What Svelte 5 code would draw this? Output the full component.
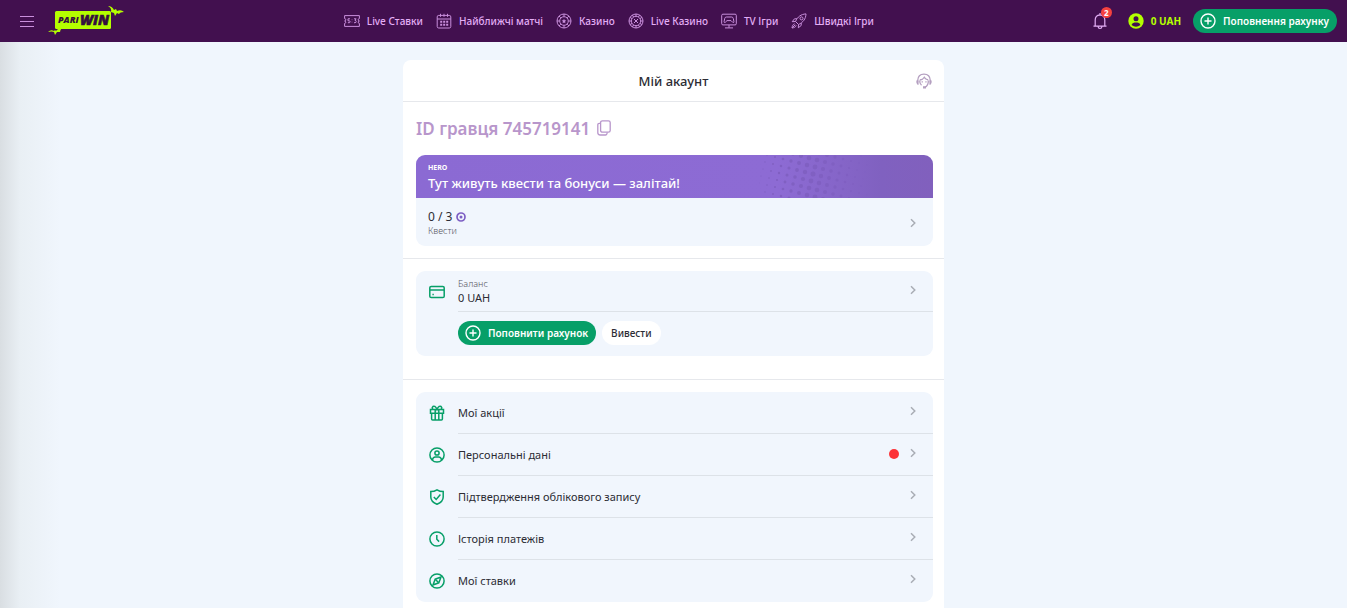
<script lang="ts">
    interface NavItem {
        icon: string;
        label: string;
    }

    interface MenuItem {
        icon: string;
        label: string;
        alert?: boolean;
    }

    const navItems: NavItem[] = [
        { icon: "score", label: "Live Ставки" },
        { icon: "calendar", label: "Найближчі матчі" },
        { icon: "chip", label: "Казино" },
        { icon: "roulette", label: "Live Казино" },
        { icon: "tv", label: "TV Ігри" },
        { icon: "rocket", label: "Швидкі Ігри" },
    ];

    const menuItems: MenuItem[] = [
        { icon: "gift", label: "Мої акції" },
        { icon: "user", label: "Персональні дані", alert: true },
        { icon: "shield", label: "Підтвердження облікового запису" },
        { icon: "clock", label: "Історія платежів" },
        { icon: "compass", label: "Мої ставки" },
    ];

    // halftone pattern on the banner: a slanted grid, biggest dots in the middle
    const dots: { x: number; y: number; r: number }[] = [];
    for (let row = -3; row < 8; row++) {
        for (let col = 0; col < 14; col++) {
            const x = 8 + col * 8 - row * 2;
            const y = row * 7 + col * 2;
            const r = 2.5 - Math.abs(x - 54) / 26;
            if (r > 0.4 && y > -3 && y < 46) dots.push({ x, y, r });
        }
    }

    let playerId = $state("745719141");
    let notifications = $state(2);

    function copyId() {
        navigator.clipboard?.writeText(playerId);
    }
</script>

{#snippet chevron()}
    <svg class="chevron" viewBox="0 0 8 10" aria-hidden="true">
        <path d="M2 1.2 5.8 5 2 8.8" />
    </svg>
{/snippet}

{#snippet plusIcon()}
    <svg class="plus" viewBox="0 0 16 16" aria-hidden="true">
        <circle cx="8" cy="8" r="7" />
        <path d="M8 4.5v7M4.5 8h7" />
    </svg>
{/snippet}

{#snippet icon(name: string)}
    <svg class="icon" viewBox="0 0 16 16" aria-hidden="true">
        {#if name === "score"}
            <path d="M.6 2.6h14.8v3a1.2 1.2 0 0 0 0 2.4 1.2 1.2 0 0 0 0 2.4v3H.6v-3A1.2 1.2 0 0 0 .6 8a1.2 1.2 0 0 0 0-2.4z" />
            <path d="M6 5.8H4v2h1.2q.9 0 .9.9 0 1-.9 1H3.9M10 5.8h2.1L11 7.4q1.2 0 1.2 1.1 0 1.2-1.2 1.2h-1M8 6.6v.5M8 8.8v.5" />
        {:else if name === "calendar"}
            <rect x="1.2" y="2.4" width="13.6" height="12.6" rx="1.5" />
            <path d="M1.2 6h13.6M4.5.8v3M8 .8v3M11.5.8v3" />
            <path class="dotted" d="M4.2 8.8h8.5M4.2 11.8h8.5" />
        {:else if name === "chip"}
            <circle cx="8" cy="8" r="7" />
            <circle cx="8" cy="8" r="4.3" />
            <path d="M8 1v2.5M8 12.5V15M1 8h2.5M12.5 8H15M3 3l1.8 1.8M11.2 11.2 13 13M13 3l-1.8 1.8M4.8 11.2 3 13" />
            <path class="filled" d="m8 5.7.7 1.5 1.6.2-1.2 1.2.3 1.6L8 9.4l-1.4.8.3-1.6-1.2-1.2 1.6-.2z" />
        {:else if name === "roulette"}
            <circle cx="8" cy="8" r="7" />
            <circle cx="8" cy="8" r="4.7" />
            <path d="m6 6 4 4M10 6l-4 4M8 1v2.3M8 12.7V15M1 8h2.3M12.7 8H15M4.5 2l1 2M10.5 12l1 2M14 4.5l-2 1M4 10.5l-2 1M2 4.5l2 1M12 10.5l2 1M11.5 2l-1 2M5.5 12l-1 2" />
        {:else if name === "tv"}
            <rect x=".7" y="1.2" width="14.6" height="10.7" rx="1.2" />
            <path d="M8 12v2.7M4 14.9h8M5.4 4h5.2q1.3 0 1.7 1.5l.6 3q.1 1.4-1.1.9L10 7.6H6L4.2 9.4q-1.2.5-1.1-.9l.6-3Q4.1 4 5.4 4z" />
        {:else if name === "rocket"}
            <path d="M4.5 8.5C6.5 3.8 10 1.2 15 .9c-.2 5-2.9 8.5-7.5 10.6zM6 5.8H3.5L1.2 8.7l3.3-.2M10.2 10v2.5l-2.9 2.3.2-3.3M3.6 10.8C1.8 11.4 1.3 12.8 1 15c2.2-.3 3.6-.8 4.2-2.6M1.2 14.8l3-3" />
            <circle cx="10.5" cy="5.4" r="1.5" />
        {:else if name === "card"}
            <rect x=".8" y="2.4" width="14.4" height="11.2" rx="1.4" />
            <path d="M1 6h14M3.4 10.4h1.4" />
        {:else if name === "gift"}
            <path d="M1.5 4.6h13v3.6h-13zM2.6 8.2v5.9q0 1 1 1h8.8q1 0 1-1V8.2M6.2 4.6v10.5M9.8 4.6v10.5M6.2 4.5H4.5Q2.8 3.8 3.4 2.2q.7-1.5 2.4-.8Q7.3 2.4 8 4.5 8.7 2.4 10.2 1.4q1.7-.7 2.4.8.6 1.6-1.1 2.3" />
        {:else if name === "user"}
            <circle cx="8" cy="8" r="7.1" />
            <circle cx="8" cy="6" r="2.1" />
            <path d="M3.4 13Q4 9.9 6.3 9.9h3.4q2.3 0 2.9 3.1" />
        {:else if name === "shield"}
            <path d="M8 .8q2.8 1.8 6.2 1.8V8q0 4.8-6.2 7.3Q1.8 12.8 1.8 8V2.6Q5.2 2.6 8 .8z" />
            <path d="m4.8 8 2.4 2.5 4.2-5" />
        {:else if name === "clock"}
            <circle cx="8" cy="8" r="7.1" />
            <path d="M7.8 4v4.3l2.3 2.3" />
        {:else if name === "compass"}
            <circle cx="8" cy="8" r="7.1" />
            <path d="m12 4-2.2 5.8L4 12l2.2-5.8z" />
            <path d="m6.5 6.5 3 3" />
        {/if}
    </svg>
{/snippet}

<div class="page">
    <header class="topbar">
        <div class="brand">
            <button class="burger" aria-label="Меню">
                <span></span>
                <span></span>
                <span></span>
            </button>
            <a class="logo" href="#home" aria-label="PariWin">
                <svg viewBox="0 0 78 30">
                    <rect x="7" y="5" width="56" height="18" rx="1.5" />
                    <path d="M60 0q4 0 6 4l2-1 1 2q4-2 7 1-4 0-5 2l-2-1-2 3-1-3-3-1q1-4-3-6z" />
                    <path d="M0 26q3-3 6-1l1-1 1 1q2-3 6-3-2 2-2 4l-3 0-2 3-1-3q-2-1-6 0z" />
                    <text class="pari" x="10" y="17">PARI</text>
                    <text class="win" x="32" y="19">WIN</text>
                </svg>
            </a>
        </div>

        <nav class="nav">
            {#each navItems as item}
                <a href="#{item.icon}">
                    {@render icon(item.icon)}
                    {item.label}
                </a>
            {/each}
        </nav>

        <div class="account">
            <button class="bell" aria-label="Сповіщення">
                <svg viewBox="0 0 16 18">
                    <path d="M1.5 14.2h13M3.2 14V8q0-4.8 4.8-5.2Q12.8 3.2 12.8 8v6M8 1v1.6M6 14.5q.3 2 2 2t2-2" />
                </svg>
                <span class="badge">{notifications}</span>
            </button>
            <a class="balance" href="#account">
                <svg viewBox="0 0 16 16" aria-hidden="true">
                    <circle cx="8" cy="8" r="7.7" />
                    <path d="M8 3.2a2.5 2.5 0 1 1 0 5 2.5 2.5 0 0 1 0-5zM3.5 12q.8-2.6 3-2.6h3q2.2 0 3 2.6-4.5 3.6-9 0z" />
                </svg>
                0 UAH
            </a>
            <button class="deposit">
                {@render plusIcon()}
                Поповнення рахунку
            </button>
        </div>
    </header>

    <main class="card">
        <div class="card-header">
            <h1>Мій акаунт</h1>
            <button class="support" aria-label="Підтримка">
                <svg viewBox="0 0 16 16">
                    <path d="M1.7 8.5v-1Q2 1.2 8 1.2t6.3 6.3v1M3.8 7Q7 6.5 8.3 4.2 9.5 6.3 12.2 6.8M3.7 7.5q-.2 3 1.8 4.7M12.3 7.5q.2 5-3.3 6.8" />
                    <path class="filled" d="M.3 7.5h2.3v4.3H1.5Q0 10 .3 7.5zM13.4 7.5h2.3q.3 2.5-1.2 4.3h-1.1zM7 13.2h3v2.2H7zM5.6 8.3h1.3v1.3H5.6zM9.3 8.3h1.3v1.3H9.3z" />
                </svg>
            </button>
        </div>

        <section>
            <div class="player">
                <h2>ID гравця {playerId}</h2>
                <button aria-label="Копіювати" onclick={copyId}>
                    <svg viewBox="0 0 14 16">
                        <rect x="3.6" y=".8" width="9.6" height="11.4" rx="1.8" />
                        <path d="M3.5 3.4H2.3Q.8 3.4.8 5v7.5q0 2.5 2.5 2.5h5.2q1.5 0 1.7-2.5" />
                    </svg>
                </button>
            </div>
            <a class="hero" href="#hero">
                <div class="banner">
                    <svg class="halftone" viewBox="0 0 112 43" aria-hidden="true">
                        {#each dots as dot}
                            <circle cx={dot.x} cy={dot.y} r={dot.r} />
                        {/each}
                    </svg>
                    <span class="tag">HERO</span>
                    <strong>Тут живуть квести та бонуси — залітай!</strong>
                </div>
                <div class="quests">
                    <div>
                        <div class="count">
                            0 / 3
                            <svg viewBox="0 0 10 10" aria-hidden="true">
                                <circle class="ring" cx="5" cy="5" r="4" />
                                <circle class="core" cx="5" cy="5" r="1.5" />
                            </svg>
                        </div>
                        <div class="caption">Квести</div>
                    </div>
                    {@render chevron()}
                </div>
            </a>
        </section>

        <section class="wallet">
            <div class="panel">
                <a class="row wallet-row" href="#balance">
                    {@render icon("card")}
                    <span class="row-body">
                        <span class="amount">
                            <small>Баланс</small>
                            <span>0 UAH</span>
                        </span>
                        {@render chevron()}
                    </span>
                </a>
                <div class="actions">
                    <button class="deposit">
                        {@render plusIcon()}
                        Поповнити рахунок
                    </button>
                    <button class="withdraw">Вивести</button>
                </div>
            </div>
        </section>

        <section class="menu">
            <div class="panel">
                {#each menuItems as item}
                    <a class="row" href="#{item.icon}">
                        {@render icon(item.icon)}
                        <span class="row-body">
                            <span>{item.label}</span>
                            {#if item.alert}
                                <span class="alert"></span>
                            {/if}
                            {@render chevron()}
                        </span>
                    </a>
                {/each}
            </div>
        </section>
    </main>
</div>

<style>
    :global(body) {
        margin: 0;
        background: #f0f6fd;
    }

    .page {
        display: flex;
        flex-direction: column;
        min-height: 100vh;
        font-family: "Noto Sans", "Open Sans", sans-serif;
        font-size: 12px;
        color: #2c2c34;
        background: linear-gradient(90deg, #d9dee2 0, #e9eff4 20px, #f0f6fd 60px);
    }

    * {
        box-sizing: border-box;
    }

    a {
        color: inherit;
        text-decoration: none;
    }

    button {
        border: 0;
        padding: 0;
        background: none;
        font: inherit;
        color: inherit;
        cursor: pointer;
    }

    svg {
        display: block;
        flex: none;
        fill: none;
        stroke: currentColor;
    }

    .topbar {
        display: flex;
        align-items: center;
        justify-content: space-between;
        height: 42px;
        padding: 0 10px 0 20px;
        background: #42104f;
        color: #e3aef5;
    }

    .brand,
    .nav,
    .nav a,
    .account,
    .balance {
        display: flex;
        align-items: center;
    }

    .brand {
        gap: 14px;
    }

    .burger {
        display: flex;
        flex-direction: column;
        gap: 4px;
        width: 14px;
    }

    .burger span {
        height: 1px;
        background: #c98fdc;
    }

    .logo svg {
        width: 78px;
        height: 30px;
        fill: #b4ff00;
        stroke: none;
    }

    .logo text {
        fill: #35103f;
        font-family: "Open Sans", sans-serif;
        font-style: italic;
        font-weight: 800;
    }

    .logo .pari {
        font-size: 9px;
    }

    .logo .win {
        font-size: 14px;
        stroke: #35103f;
        stroke-width: 0.6;
    }

    .nav {
        gap: 13px;
        padding-bottom: 1px;
        font-size: 10px;
        font-weight: 500;
        white-space: nowrap;
    }

    .nav a {
        gap: 7px;
    }

    .icon {
        width: 16px;
        height: 16px;
    }

    .nav .icon {
        color: #c98fdc;
    }

    .dotted {
        stroke-width: 2;
        stroke-dasharray: 2 1;
    }

    .filled {
        fill: currentColor;
        stroke: none;
    }

    .account {
        font-size: 10px;
        font-weight: 700;
        white-space: nowrap;
    }

    .bell {
        position: relative;
        margin-right: 20px;
    }

    .bell svg {
        width: 16px;
        height: 18px;
        stroke-width: 1.2;
    }

    .badge {
        position: absolute;
        top: -5px;
        right: -4px;
        width: 11px;
        height: 11px;
        border-radius: 50%;
        background: #f5413f;
        color: #fff;
        font-size: 8px;
        line-height: 11px;
    }

    .balance {
        gap: 7px;
        margin-right: 12px;
        color: #b4ff00;
    }

    .balance svg {
        width: 16px;
        height: 16px;
        fill: #b4ff00;
        stroke: none;
    }

    .balance path {
        fill: #42104f;
    }

    .deposit {
        display: flex;
        align-items: center;
        gap: 7px;
        height: 24px;
        padding: 0 8px 0 7px;
        border-radius: 12px;
        background: #079f68;
        color: #fff;
        font-size: 10px;
        font-weight: 600;
        white-space: nowrap;
    }

    .plus {
        width: 16px;
        height: 16px;
        stroke-width: 1.4;
    }

    .card {
        flex: 1;
        width: 100%;
        max-width: 541px;
        margin: 18px auto 0;
        border-radius: 8px 8px 0 0;
        background: #fff;
    }

    .card-header {
        display: grid;
        grid-template-columns: 1fr auto 1fr;
        align-items: center;
        height: 42px;
        padding: 0 12px;
        border-bottom: 1px solid #e6e8ec;
    }

    h1 {
        grid-column: 2;
        margin: 0;
        font-size: 13px;
        font-weight: 500;
    }

    .support {
        justify-self: end;
        color: #b49fc0;
    }

    .support svg {
        width: 16px;
        height: 16px;
        stroke-width: 1.3;
    }

    section {
        padding: 12px 11px 12px 13px;
        border-bottom: 1px solid #e6e8ec;
    }

    .player {
        display: flex;
        align-items: center;
        gap: 7px;
        height: 28px;
        margin-bottom: 13px;
        color: #b896cb;
    }

    h2 {
        margin: 0;
        font-size: 17px;
        font-weight: 600;
    }

    .player svg {
        width: 14px;
        height: 16px;
        stroke-width: 1.3;
    }

    .hero {
        display: block;
        overflow: hidden;
        border-radius: 9px;
        background: #f1f6fd;
    }

    .banner {
        position: relative;
        display: flex;
        flex-direction: column;
        height: 43px;
        padding: 7px 12px 0;
        background: linear-gradient(90deg, #8b6ad3 0%, #8d6bd4 70%, #8061c0 90%, #8160bd 100%);
        color: #fff;
    }

    .halftone {
        position: absolute;
        top: 0;
        right: 62px;
        height: 43px;
        fill: #8060c2;
        stroke: none;
    }

    .tag {
        font-size: 7px;
        font-weight: 700;
        line-height: 11px;
    }

    .banner strong {
        font-size: 13px;
        font-weight: 500;
        line-height: 20px;
    }

    .quests {
        display: flex;
        align-items: center;
        justify-content: space-between;
        height: 48px;
        padding: 2px 16px 0 12px;
    }

    .count {
        display: flex;
        align-items: center;
        gap: 4px;
        line-height: 15px;
    }

    .count svg {
        width: 10px;
        height: 10px;
        color: #7d5fc4;
    }

    .ring {
        stroke-width: 1.7;
    }

    .core {
        fill: currentColor;
        stroke: none;
    }

    .caption,
    small {
        color: #55555d;
        font-size: 9px;
        font-weight: 300;
        line-height: 13px;
    }

    .chevron {
        width: 8px;
        height: 10px;
        color: #a9adb5;
        stroke-width: 1.5;
    }

    .wallet {
        padding-bottom: 24px;
    }

    .menu {
        padding-bottom: 0;
        border: 0;
    }

    .panel {
        border-radius: 9px;
        background: #f1f6fd;
    }

    .row {
        display: flex;
        align-items: center;
        gap: 13px;
        padding-left: 13px;
        font-size: 11px;
    }

    .row .icon {
        color: #079f68;
        stroke-width: 1.5;
    }

    .row-body {
        display: flex;
        flex: 1;
        align-items: center;
        height: 42px;
        padding-right: 16px;
        border-bottom: 1px solid #dde2e8;
    }

    .row-body .chevron {
        margin: 0 0 3px auto;
    }

    .menu .row:last-child .row-body {
        border-color: transparent;
    }

    .amount {
        display: flex;
        flex-direction: column;
        line-height: 15px;
    }

    .wallet-row .row-body {
        height: 41px;
    }

    .alert {
        width: 10px;
        height: 10px;
        margin: 0 10px 2px auto;
        border-radius: 50%;
        background: #fc3237;
    }

    .alert + .chevron {
        margin-left: 0;
    }

    .actions {
        display: flex;
        gap: 6px;
        padding: 9px 12px 11px 42px;
    }

    .wallet .panel {
        margin-bottom: -1px;
    }

    .withdraw {
        height: 24px;
        padding: 0 9px;
        border-radius: 12px;
        background: #fff;
        font-size: 10px;
        font-weight: 500;
    }
</style>
